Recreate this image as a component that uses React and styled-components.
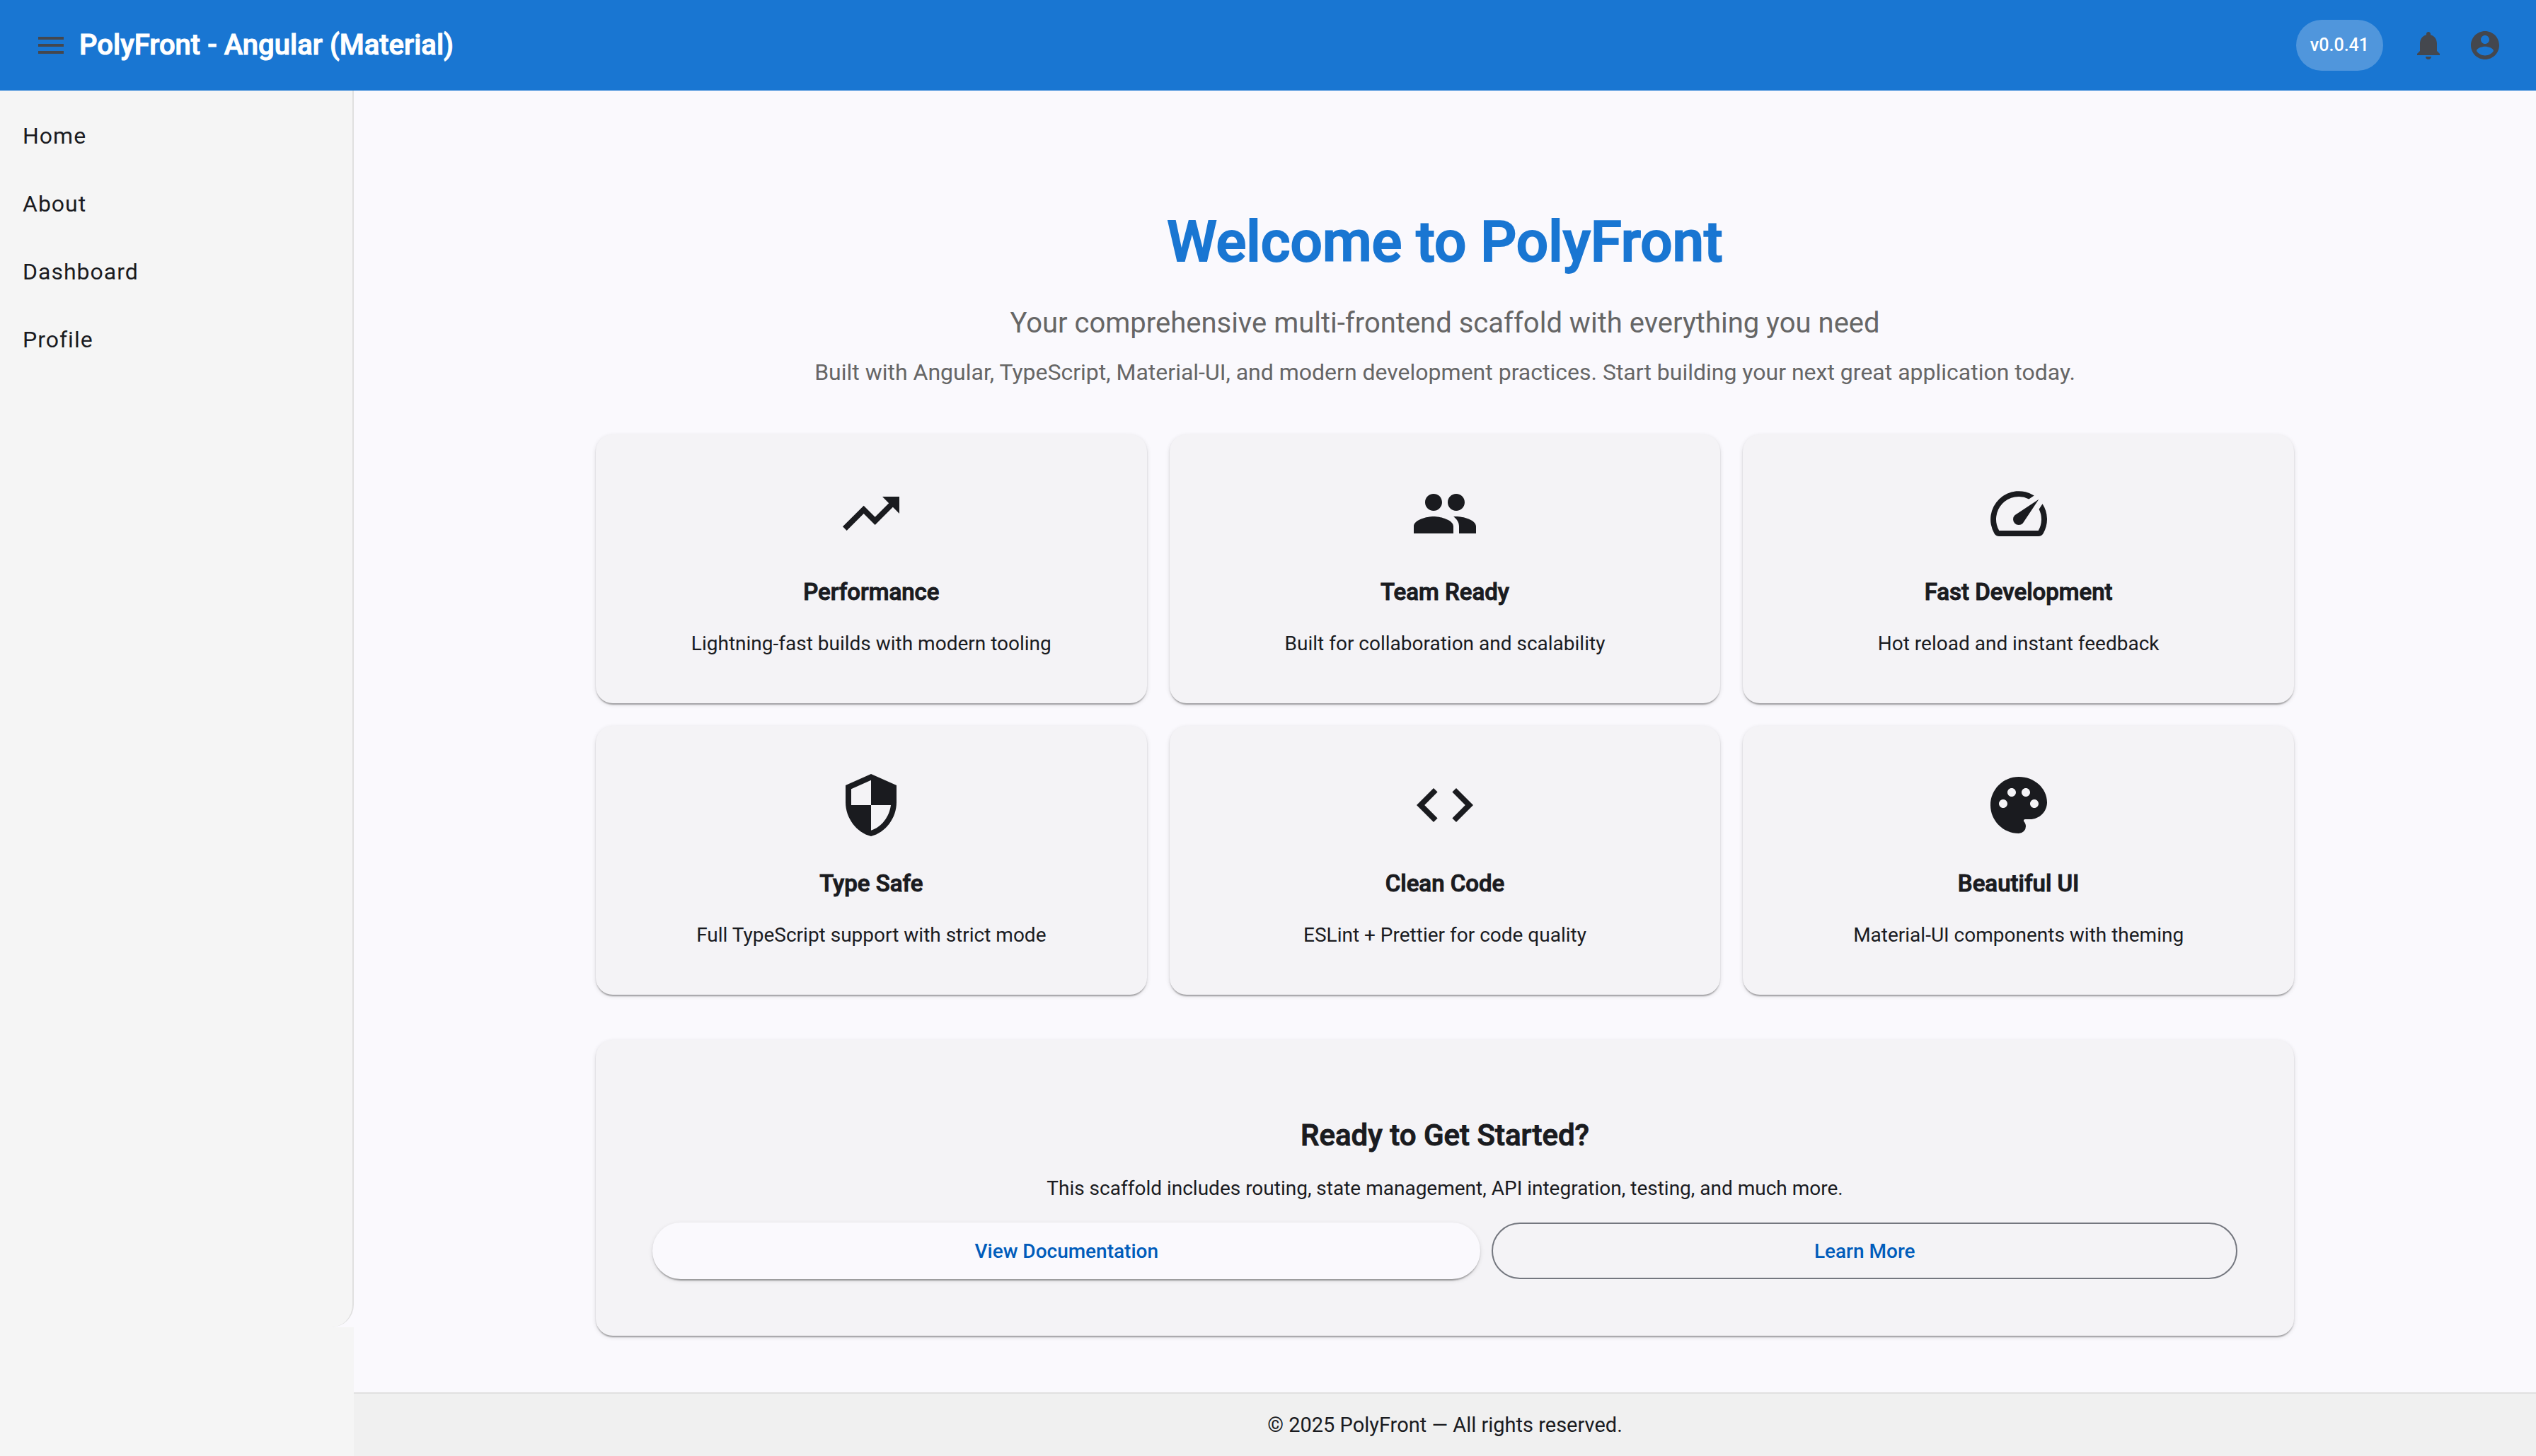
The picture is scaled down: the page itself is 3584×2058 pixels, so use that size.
import React from "react";
import styled, { createGlobalStyle, css } from "styled-components";
import {
  MdMenu,
  MdNotifications,
  MdTrendingUp,
  MdGroup,
  MdSpeed,
  MdSecurity,
  MdCode,
  MdPalette,
} from "react-icons/md";

const color = {
  primary: "#1976d2",
  action: "#005cbb",
  surface: "#faf9fd",
  card: "#f4f3f6",
  side: "#f5f5f5",
  footer: "#f0f0f0",
  line: "#e0e0e0",
  outline: "#74777f",
  ink: "#1a1b1f",
  muted: "#666666",
  icon: "#44474e",
};

const raised = `
  0 4px 2px -2px rgba(0, 0, 0, 0.2),
  0 2px 2px 0 rgba(0, 0, 0, 0.14),
  0 2px 6px 0 rgba(0, 0, 0, 0.12)
`;

/* Headings are the medium cut, thickened by an outline in the text colour. */
const heading = css`
  font-weight: 500;
  -webkit-text-stroke: ${(p) => (p.$display ? "2px" : "1px")} currentColor;
`;

const GlobalStyle = createGlobalStyle`
  *, *::before, *::after { box-sizing: border-box; }
  body {
    margin: 0;
    background: ${color.surface};
    color: ${color.ink};
    font-family: Roboto, "Liberation Sans", sans-serif;
    font-size: 28px;
    line-height: 40px;
  }
  h1, h2, h3, p, ul { margin: 0; padding: 0; }
`;

const Shell = styled.div`
  display: flex;
  flex-direction: column;
  min-height: 100vh;
`;

const Toolbar = styled.header`
  display: flex;
  align-items: center;
  height: 128px;
  padding: 0 32px;
  background: ${color.primary};
  color: #ffffff;
`;

const IconButton = styled.button`
  display: flex;
  align-items: center;
  justify-content: center;
  width: 80px;
  height: 80px;
  padding: 0;
  border: 0;
  border-radius: 50%;
  background: transparent;
  color: ${color.icon};
  font-size: 48px;
  cursor: pointer;
`;

const Brand = styled.span`
  ${heading}
  flex: 1;
  font-size: 40px;
  line-height: 64px;
`;

const Version = styled.span`
  margin-right: 24px;
  padding: 16px 20px;
  border-radius: 36px;
  background: rgba(255, 255, 255, 0.24);
  font-size: 25px;
  font-weight: 500;
`;

const Body = styled.div`
  display: flex;
  flex: 1;
`;

const Sidebar = styled.aside`
  display: flex;
  flex-direction: column;
  flex: 0 0 500px;
  padding-bottom: 182px;
  background: ${color.side};
`;

const DrawerBack = styled.div`
  display: flex;
  flex: 1;
  background: ${color.surface};
`;

const Drawer = styled.nav`
  flex: 1;
  padding: 16px 0;
  border-right: 2px solid ${color.line};
  border-radius: 0 0 32px 0;
  background: ${color.side};
`;

const NavList = styled.ul`
  list-style: none;
`;

const NavLink = styled.a`
  display: flex;
  align-items: center;
  height: 96px;
  padding: 0 32px;
  color: ${color.ink};
  font-size: 32px;
  letter-spacing: 1px;
  text-decoration: none;
`;

const Page = styled.div`
  display: flex;
  flex-direction: column;
  flex: 1;
`;

const Main = styled.main`
  flex: 1;
  width: 100%;
  max-width: 2560px;
  margin: 0 auto;
  padding: 160px 80px 80px;
`;

const Hero = styled.section`
  display: flex;
  flex-direction: column;
  align-items: center;
  margin-bottom: 64px;
  text-align: center;
  color: ${color.muted};
`;

const HeroTitle = styled.h1`
  ${heading}
  margin-bottom: 32px;
  color: ${color.primary};
  font-size: 80px;
  line-height: 108px;
`;

const HeroLead = styled.p`
  margin-bottom: 16px;
  font-size: 40px;
  line-height: 58px;
`;

const HeroText = styled.p`
  font-size: 32px;
  line-height: 48px;
`;

const Features = styled.section`
  display: grid;
  grid-template-columns: repeat(3, 1fr);
  gap: 32px;
  margin-bottom: 64px;
`;

const Card = styled.article`
  display: flex;
  flex-direction: column;
  align-items: center;
  padding: 64px;
  border-radius: 24px;
  background: ${color.card};
  box-shadow: ${raised};
  text-align: center;

  svg {
    width: 96px;
    height: 96px;
    margin-bottom: 40px;
  }
`;

const CardTitle = styled.h3`
  ${heading}
  margin-bottom: 30px;
  font-size: 33px;
  line-height: 46px;
`;

const Callout = styled.section`
  padding: 104px 80px 80px;
  border-radius: 24px;
  background: ${color.card};
  box-shadow: ${raised};
  text-align: center;
`;

const CalloutTitle = styled.h2`
  ${heading}
  margin-bottom: 24px;
  font-size: 42px;
  line-height: 62px;
`;

const Actions = styled.div`
  display: flex;
  gap: 16px;
  margin-top: 28px;
`;

const ActionButton = styled.button`
  flex: 1 1 auto;
  height: 80px;
  padding: 0 46px;
  border: 2px solid ${(p) => (p.$outlined ? color.outline : color.surface)};
  border-radius: 40px;
  background: ${(p) => (p.$outlined ? "transparent" : color.surface)};
  box-shadow: ${(p) => (p.$outlined ? "none" : raised)};
  color: ${color.action};
  font-family: inherit;
  font-size: 28px;
  font-weight: 500;
  cursor: pointer;
`;

const Footer = styled.footer`
  padding: 24px;
  border-top: 2px solid ${color.line};
  background: ${color.footer};
  font-size: 29px;
  text-align: center;
`;

function AccountIcon() {
  return (
    <svg width="1em" height="1em" viewBox="0 0 24 24" fill="currentColor" aria-hidden="true">
      <path d="M12 2C6.48 2 2 6.48 2 12s4.48 10 10 10 10-4.48 10-10S17.52 2 12 2zm0 3c1.66 0 3 1.34 3 3s-1.34 3-3 3-3-1.34-3-3 1.34-3 3-3zm0 14.2c-2.5 0-4.71-1.28-6-3.22.03-1.99 4-3.08 6-3.08 1.99 0 5.97 1.09 6 3.08-1.29 1.94-3.5 3.22-6 3.22z" />
    </svg>
  );
}

const links = ["Home", "About", "Dashboard", "Profile"];

const features = [
  { icon: MdTrendingUp, title: "Performance", text: "Lightning-fast builds with modern tooling" },
  { icon: MdGroup, title: "Team Ready", text: "Built for collaboration and scalability" },
  { icon: MdSpeed, title: "Fast Development", text: "Hot reload and instant feedback" },
  { icon: MdSecurity, title: "Type Safe", text: "Full TypeScript support with strict mode" },
  { icon: MdCode, title: "Clean Code", text: "ESLint + Prettier for code quality" },
  { icon: MdPalette, title: "Beautiful UI", text: "Material-UI components with theming" },
];

export default function App() {
  return (
    <Shell>
      <GlobalStyle />
      <Toolbar>
        <IconButton type="button" aria-label="Toggle menu">
          <MdMenu />
        </IconButton>
        <Brand>PolyFront - Angular (Material)</Brand>
        <Version>v0.0.41</Version>
        <IconButton type="button" aria-label="Notifications">
          <MdNotifications />
        </IconButton>
        <IconButton type="button" aria-label="Account">
          <AccountIcon />
        </IconButton>
      </Toolbar>
      <Body>
        <Sidebar>
          <DrawerBack>
            <Drawer>
              <NavList>
                {links.map((name) => (
                  <li key={name}>
                    <NavLink href={`#${name.toLowerCase()}`}>{name}</NavLink>
                  </li>
                ))}
              </NavList>
            </Drawer>
          </DrawerBack>
        </Sidebar>
        <Page>
          <Main>
            <Hero>
              <HeroTitle $display>Welcome to PolyFront</HeroTitle>
              <HeroLead>Your comprehensive multi-frontend scaffold with everything you need</HeroLead>
              <HeroText>
                Built with Angular, TypeScript, Material-UI, and modern development practices. Start
                building your next great application today.
              </HeroText>
            </Hero>
            <Features>
              {features.map(({ icon: Icon, title, text }) => (
                <Card key={title}>
                  <Icon aria-hidden="true" />
                  <CardTitle>{title}</CardTitle>
                  <p>{text}</p>
                </Card>
              ))}
            </Features>
            <Callout>
              <CalloutTitle>Ready to Get Started?</CalloutTitle>
              <p>
                This scaffold includes routing, state management, API integration, testing, and much
                more.
              </p>
              <Actions>
                <ActionButton type="button">View Documentation</ActionButton>
                <ActionButton type="button" $outlined>
                  Learn More
                </ActionButton>
              </Actions>
            </Callout>
          </Main>
          <Footer>© 2025 PolyFront — All rights reserved.</Footer>
        </Page>
      </Body>
    </Shell>
  );
}
